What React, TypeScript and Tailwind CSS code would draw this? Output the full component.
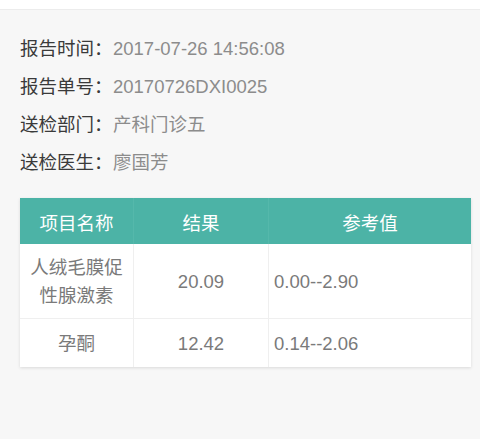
import React from "react";

const info = [
  ["报告时间：", "2017-07-26 14:56:08"],
  ["报告单号：", "20170726DXI0025"],
  ["送检部门：", "产科门诊五"],
  ["送检医生：", "廖国芳"],
];

export default function App() {
  return (
    <div
      className="w-[480px] h-[439px] bg-[#f7f7f7] overflow-hidden"
      style={{ fontFamily: '"Liberation Sans", "Noto Sans CJK SC", sans-serif' }}
    >
      <div className="h-[10px] bg-white border-b border-[#ececec]" />
      <div className="pt-[20px] px-[20px]">
        {info.map(([k, v]) => (
          <div key={k} className="flex h-[38px] items-center text-[18.5px]">
            <span className="text-[#3a3a3a] w-[93px] shrink-0">{k}</span>
            <span className="text-[#8c8c8c]">{v}</span>
          </div>
        ))}
      </div>
      <div className="mx-[20px] mt-[16px] w-[451px] bg-white shadow-[0_1px_3px_rgba(0,0,0,0.12)] text-[18.5px]">
        <div className="flex h-[46px] bg-[#4cb3a6] text-white">
          <div className="w-[113px] h-full flex items-center justify-center pt-[6px]">项目名称</div>
          <div className="w-[135px] h-full flex items-center justify-center border-l border-[#55b8ab] pt-[6px]">结果</div>
          <div className="flex-1 h-full flex items-center justify-center border-l border-[#55b8ab] pt-[6px]">参考值</div>
        </div>
        <div className="flex h-[75px] text-[#7a7a7a] border-b border-[#efefef]">
          <div className="w-[113px] flex items-center justify-center text-center leading-[28px] px-[7px] pt-[2px]">
            人绒毛膜促性腺激素
          </div>
          <div className="w-[135px] flex items-center justify-center border-l border-[#efefef] pt-[2px]">20.09</div>
          <div className="flex-1 flex items-center pl-[5px] border-l border-[#efefef] pt-[2px]">0.00--2.90</div>
        </div>
        <div className="flex h-[48px] text-[#7a7a7a]">
          <div className="w-[113px] flex items-center justify-center pt-[2px]">孕酮</div>
          <div className="w-[135px] flex items-center justify-center border-l border-[#efefef] pt-[2px]">12.42</div>
          <div className="flex-1 flex items-center pl-[5px] border-l border-[#efefef] pt-[2px]">0.14--2.06</div>
        </div>
      </div>
    </div>
  );
}
